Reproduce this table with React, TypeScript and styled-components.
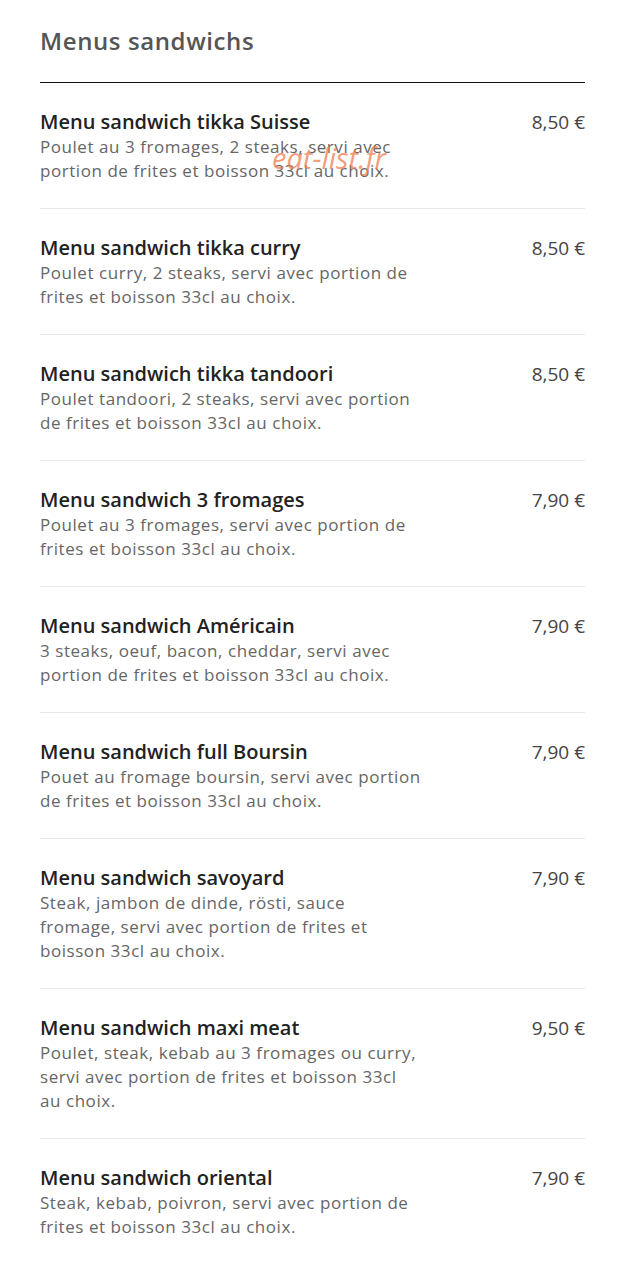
import React from 'react';
import styled, { createGlobalStyle } from 'styled-components';

const GlobalStyle = createGlobalStyle`
  body {
    margin: 0;
    background: #fff;
    font-family: 'Open Sans', 'Noto Sans', sans-serif;
  }
`;

const Page = styled.div`
  padding: 20px 50px 0 40px;
  position: relative;
`;

const Title = styled.h2`
  margin: 0;
  font-size: 24px;
  font-weight: 600;
  letter-spacing: 0.6px;
  color: #555;
  line-height: 41px;
  padding-bottom: 21px;
  border-bottom: 1px solid #111;
`;

const List = styled.div`
  display: flex;
  flex-direction: column;
`;

const Item = styled.div<{ $last?: boolean }>`
  display: flex;
  justify-content: space-between;
  align-items: flex-start;
  padding: 26px 0 25px;
  border-bottom: ${(p) => (p.$last ? 'none' : '1px solid #e8e8e8')};
`;

const Info = styled.div`
  width: 381px;
`;

const Name = styled.div`
  font-size: 20px;
  font-weight: 600;
  color: #222;
  line-height: 26px;
`;

const Desc = styled.div`
  font-size: 17px;
  letter-spacing: 0.55px;
  color: #666;
  line-height: 24px;
`;

const Price = styled.div`
  font-size: 19px;
  color: #444;
  line-height: 26px;
  white-space: nowrap;
`;

const Watermark = styled.div`
  position: absolute;
  left: 272px;
  top: 143px;
  font-family: 'Open Sans', sans-serif;
  font-style: italic;
  font-size: 29px;
  line-height: 30px;
  color: rgba(240, 125, 80, 0.75);
  pointer-events: none;
`;

const items = [
  {
    name: 'Menu sandwich tikka Suisse',
    desc: 'Poulet au 3 fromages, 2 steaks, servi avec portion de frites et boisson 33cl au choix.',
    price: '8,50 €',
  },
  {
    name: 'Menu sandwich tikka curry',
    desc: 'Poulet curry, 2 steaks, servi avec portion de frites et boisson 33cl au choix.',
    price: '8,50 €',
  },
  {
    name: 'Menu sandwich tikka tandoori',
    desc: 'Poulet tandoori, 2 steaks, servi avec portion de frites et boisson 33cl au choix.',
    price: '8,50 €',
  },
  {
    name: 'Menu sandwich 3 fromages',
    desc: 'Poulet au 3 fromages, servi avec portion de frites et boisson 33cl au choix.',
    price: '7,90 €',
  },
  {
    name: 'Menu sandwich Américain',
    desc: '3 steaks, oeuf, bacon, cheddar, servi avec portion de frites et boisson 33cl au choix.',
    price: '7,90 €',
  },
  {
    name: 'Menu sandwich full Boursin',
    desc: 'Pouet au fromage boursin, servi avec portion de frites et boisson 33cl au choix.',
    price: '7,90 €',
  },
  {
    name: 'Menu sandwich savoyard',
    desc: 'Steak, jambon de dinde, rösti, sauce fromage, servi avec portion de frites et boisson 33cl au choix.',
    price: '7,90 €',
  },
  {
    name: 'Menu sandwich maxi meat',
    desc: 'Poulet, steak, kebab au 3 fromages ou curry, servi avec portion de frites et boisson 33cl au choix.',
    price: '9,50 €',
  },
  {
    name: 'Menu sandwich oriental',
    desc: 'Steak, kebab, poivron, servi avec portion de frites et boisson 33cl au choix.',
    price: '7,90 €',
  },
];

export default function App() {
  return (
    <>
      <GlobalStyle />
      <Page>
        <Title>Menus sandwichs</Title>
        <List>
          {items.map((it, i) => (
            <Item key={it.name} $last={i === items.length - 1}>
              <Info>
                <Name>{it.name}</Name>
                <Desc>{it.desc}</Desc>
              </Info>
              <Price>{it.price}</Price>
            </Item>
          ))}
        </List>
        <Watermark>eat-list.fr</Watermark>
      </Page>
    </>
  );
}
